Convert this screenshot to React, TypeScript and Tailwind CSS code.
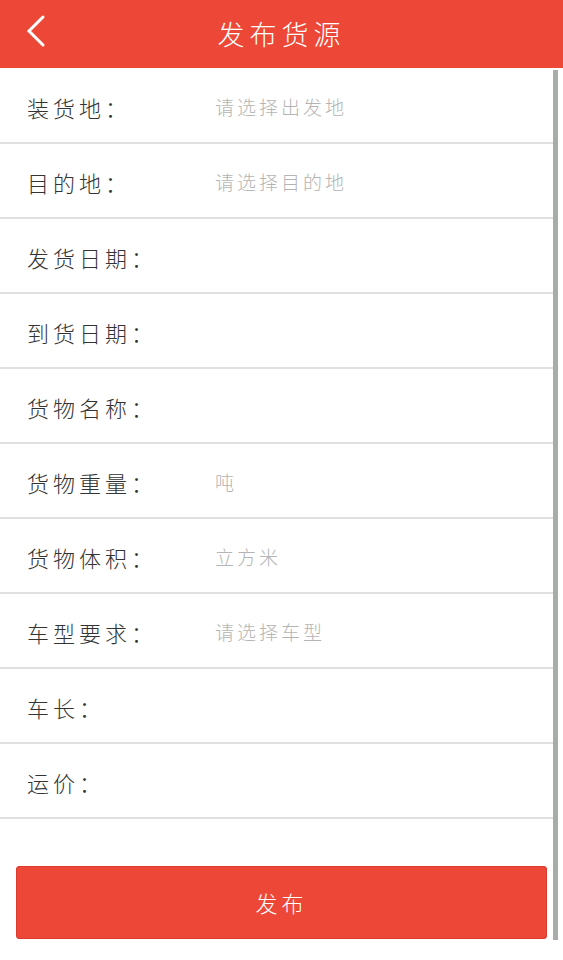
import React from 'react';

const font = { fontFamily: '"Noto Sans CJK SC", "Noto Sans", sans-serif' };

interface Field {
  label: string;
  placeholder?: string;
}

const fields: Field[] = [
  { label: '装货地：', placeholder: '请选择出发地' },
  { label: '目的地：', placeholder: '请选择目的地' },
  { label: '发货日期：' },
  { label: '到货日期：' },
  { label: '货物名称：' },
  { label: '货物重量：', placeholder: '吨' },
  { label: '货物体积：', placeholder: '立方米' },
  { label: '车型要求：', placeholder: '请选择车型' },
  { label: '车长：' },
  { label: '运价：' },
];

function FormRow({ label, placeholder }: Field) {
  return (
    <div className="flex h-[75px] items-center border-b-2 border-[#e0e0e0] pt-[3px]">
      <div className="w-[215px] shrink-0 pl-[27px] text-[22px] font-light tracking-[4px] text-[#333]">
        {label}
      </div>
      {placeholder && (
        <div className="text-[19px] font-light tracking-[3px] text-[#b4b4b4]">{placeholder}</div>
      )}
    </div>
  );
}

export default function App() {
  return (
    <div className="h-[960px] w-[563px] overflow-hidden bg-white" style={font}>
      <header className="relative flex h-[68px] items-center justify-center bg-[#ec4737]">
        <svg className="absolute left-[24px] top-[13px]" width="24" height="36" viewBox="0 0 24 36">
          <path d="M19 4 L5 18 L19 32" fill="none" stroke="white" strokeWidth="3" strokeLinecap="round" />
        </svg>
        <h1 className="text-[27px] font-light tracking-[5px] text-white">发布货源</h1>
      </header>

      <div className="relative h-[892px]">
        <div className="absolute right-[5px] top-[2px] h-[870px] w-[5px] bg-[#a9ada9]" />
        <div className="pr-[10px] pt-[1px]">
          {fields.map((f) => (
            <FormRow key={f.label} {...f} />
          ))}
        </div>
        <div className="mr-[16px] ml-[16px] mt-[47px]">
          <button className="flex h-[73px] w-[531px] items-center justify-center rounded-[3px] border border-[#d93a2b] bg-[#ec4737] text-[22px] font-light tracking-[4px] text-white">
            发布
          </button>
        </div>
      </div>
    </div>
  );
}
